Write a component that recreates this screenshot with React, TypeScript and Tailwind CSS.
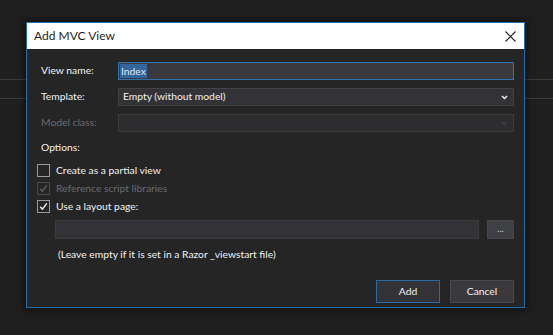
import React from "react";

const font = { fontFamily: 'Lato, "Open Sans", Arial, sans-serif' };

function Chevron({ color = "#f1f1f1" }: { color?: string }) {
  return (
    <svg width="7" height="5" viewBox="0 0 7 5" fill="none">
      <path d="M1 1 L3.5 3.5 L6 1" stroke={color} strokeWidth="1.5" />
    </svg>
  );
}

function Check({ color }: { color: string }) {
  return (
    <svg width="11" height="11" viewBox="0 0 11 11" fill="none">
      <path d="M2.2 5.8 L4.4 8.2 L8.8 2.4" stroke={color} strokeWidth="1.5" />
    </svg>
  );
}

function CheckRow({ label, checked, disabled }: { label: string; checked?: boolean; disabled?: boolean }) {
  return (
    <div className="flex items-center h-[18px]">
      <div
        className={
          "w-[13px] h-[13px] border flex items-center justify-center " +
          (disabled ? "border-[#4a4a4d]" : "border-[#9a9a9c]")
        }
      >
        {checked && <Check color={disabled ? "#5f5f62" : "#f1f1f1"} />}
      </div>
      <span className={"ml-[6px] text-[10.3px] leading-none " + (disabled ? "text-[#6b6b6e]" : "text-[#f1f1f1]")}>
        {label}
      </span>
    </div>
  );
}

export default function App() {
  return (
    <div className="relative w-[553px] h-[335px] bg-[#1f1f1f] overflow-hidden pl-[26px] pt-[22px]" style={font}>
      <div className="absolute left-0 right-0 top-[79px] h-px bg-[#3d3d3f]" />
      <div className="absolute left-0 right-0 top-[98px] h-px bg-[#3d3d3f]" />
      <div className="relative w-[499px] h-[286px] border border-[#1f6fae] bg-[#252526] flex flex-col shadow-[0_0_6px_2px_rgba(0,0,0,0.5)]">
        <div className="h-[26px] bg-white flex items-center justify-between pl-[7px] pr-[8px]">
          <span className="text-[12px] text-[#1e1e1e]">Add MVC View</span>
          <svg width="11" height="11" viewBox="0 0 11 11" fill="none">
            <path d="M0.5 0.5 L10.5 10.5 M10.5 0.5 L0.5 10.5" stroke="#1e1e1e" strokeWidth="1.1" />
          </svg>
        </div>
        <div className="flex flex-col pl-[10px] pr-[10px] pt-[13px] flex-1">
          <div className="flex items-center h-[18px]">
            <span className="w-[81px] pl-[4px] text-[10.3px] text-[#f1f1f1]">View name:</span>
            <div className="flex-1 h-[18px] bg-[#3a3a3e] border border-[#2e73b3] flex items-center pl-[1px]">
              <span className="bg-[#35659b] text-[#dce8f5] text-[10.3px] leading-[14px] px-[1px]">Index</span>
            </div>
          </div>
          <div className="flex items-center h-[18px] mt-[8px]">
            <span className="w-[81px] pl-[4px] text-[10.3px] text-[#f1f1f1]">Template:</span>
            <div className="flex-1 h-[18px] bg-[#333337] border border-[#434346] flex items-center justify-between pl-[4px] pr-[5px]">
              <span className="text-[10.3px] text-[#f1f1f1]">Empty (without model)</span>
              <Chevron />
            </div>
          </div>
          <div className="flex items-center h-[18px] mt-[8px]">
            <span className="w-[81px] pl-[4px] text-[10.3px] text-[#6b6b6e]">Model class:</span>
            <div className="flex-1 h-[18px] bg-[#2d2d30] border border-[#3c3c3f] flex items-center justify-end pr-[5px]">
              <Chevron color="#3f3f42" />
            </div>
          </div>
          <div className="flex items-center h-[16px] mt-[8px] pl-[4px]">
            <span className="text-[10.3px] text-[#f1f1f1]">Options:</span>
          </div>
          <div className="flex flex-col mt-[5px]">
            <CheckRow label="Create as a partial view" />
            <CheckRow label="Reference script libraries" checked disabled />
            <CheckRow label="Use a layout page:" checked />
          </div>
          <div className="flex items-center mt-[5px] ml-[18px] gap-[8px]">
            <div className="flex-1 h-[19px] bg-[#333337] border border-[#3c3c3f]" />
            <div className="w-[27px] h-[19px] bg-[#3f3f46] border border-[#46464a] flex items-center justify-center">
              <span className="text-[9px] text-[#d0d0d0] leading-none -mt-[3px]">...</span>
            </div>
          </div>
          <div className="flex items-center h-[16px] mt-[8px] ml-[21px]">
            <span className="text-[10.3px] text-[#f1f1f1]">(Leave empty if it is set in a Razor _viewstart file)</span>
          </div>
          <div className="flex justify-end gap-[10px] mt-[17px]">
            <div className="w-[64px] h-[23px] bg-[#333337] border border-[#2a6aa6] flex items-center justify-center">
              <span className="text-[10.3px] text-[#f1f1f1]">Add</span>
            </div>
            <div className="w-[64px] h-[23px] bg-[#3a3a3e] border border-[#48484c] flex items-center justify-center">
              <span className="text-[10.3px] text-[#f1f1f1]">Cancel</span>
            </div>
          </div>
        </div>
      </div>
    </div>
  );
}
